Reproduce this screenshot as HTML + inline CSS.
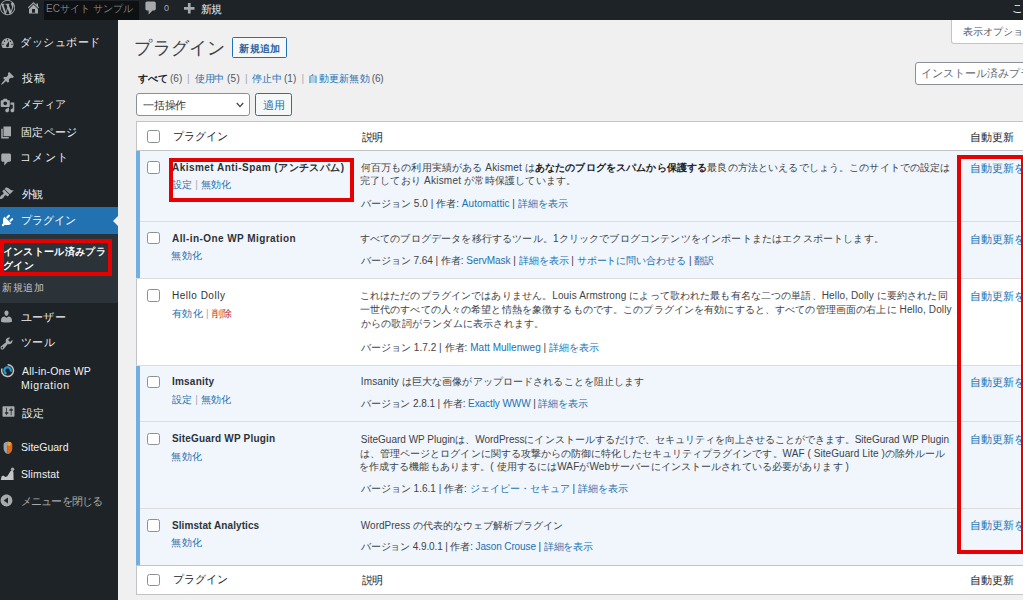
<!DOCTYPE html>
<html><head><meta charset="utf-8">
<style>
*{box-sizing:border-box;margin:0;padding:0}
html,body{width:1023px;height:600px;overflow:hidden;background:#f0f0f1;font-family:"Liberation Sans",sans-serif;}
.a{position:absolute}
.t{position:absolute;white-space:nowrap;line-height:1;}
.t a{color:#2271b1;text-decoration:none}
.t b{font-weight:700}
.cb{position:absolute;width:12.5px;height:12.5px;border:1px solid #8c8f94;border-radius:2.5px;background:#fff}
.rr{position:absolute;border:4px solid #e60000}
</style></head><body>
<!-- admin bar -->
<div class="a" style="left:0;top:0;width:1023px;height:20px;background:#1d2327"></div>
<div class="a" style="left:44px;top:1px;width:95px;height:18.5px;background:#0e1012"></div>
<!-- wp logo -->
<svg class="a" style="left:-0.4px;top:0.4px" width="15.2" height="15.2" viewBox="0 0 20 20"><path fill="#a7aaad" d="M20 10c0-5.52-4.48-10-10-10S0 4.48 0 10s4.48 10 10 10 10-4.48 10-10zM7.78 15.37L4.37 6.22c.55-.02 1.17-.08 1.17-.08.5-.06.44-1.13-.06-1.11 0 0-1.45.11-2.37.11-.18 0-.37 0-.58-.01C4.12 2.69 6.87 1.07 10 1.07c2.33 0 4.450.87 6.050 2.340-.68-.11-1.650.39-1.650 1.580 0 .74.45 1.360.9 2.100.35.610.55 1.360.55 2.460 0 1.490-1.400 5-1.400 5l-3.030-8.370c.54-.02.820-.17.820-.17.5-.05.44-1.250-.06-1.220 0 0-1.440.12-2.380.12-.87 0-2.330-.12-2.330-.12-.5-.03-.56 1.200-.06 1.220l.92.08 1.260 3.410zM17.410 10c.24-.64.74-1.870.43-4.250.7 1.290 1.050 2.710 1.050 4.250 0 3.290-1.730 6.240-4.400 7.780.97-2.590 1.940-5.200 2.920-7.780zM6.100 18.090C3.120 16.650 1.110 13.530 1.110 10c0-1.300.23-2.480.72-3.590.84 2.300 1.670 4.600 2.510 6.910.58 1.590 1.170 3.180 1.760 4.770zm4.030-6.630l2.580 6.980c-.86.29-1.760.45-2.710.45-.79 0-1.570-.11-2.290-.33.81-2.380 1.620-4.740 2.420-7.100z"/></svg>
<!-- home icon -->
<svg class="a" style="left:26.4px;top:0.2px" width="15" height="15" viewBox="0 0 20 20"><path fill="#a7aaad" d="M16 8.5l1.53 1.53-1.06 1.06L10 4.62l-6.47 6.47-1.06-1.06L10 2.5l4 4v-2h2v4zm-6-2.46l6 5.99V18H4v-5.97zM12 17v-5H8v5h4z"/></svg>
<!-- comment icon -->
<svg class="a" style="left:142.6px;top:0.4px" width="16" height="16" viewBox="0 0 20 20"><path fill="#a7aaad" d="M5 2h9c1.1 0 2 .9 2 2v7c0 1.1-.9 2-2 2h-2l-5 5v-5H5c-1.1 0-2-.9-2-2V4c0-1.1.9-2 2-2z"/></svg>
<!-- plus -->
<svg class="a" style="left:184.2px;top:3px" width="10.5" height="10.6" viewBox="0 0 10.5 10.6"><path fill="#a7aaad" d="M3.9 0h2.7v3.95h3.9v2.7H6.6v3.95H3.9V6.65H0v-2.7h3.9z"/></svg>

<!-- sidebar -->
<div class="a" style="left:0;top:20px;width:118px;height:580px;background:#1d2327"></div>
<div class="a" style="left:0;top:206.7px;width:118px;height:27.5px;background:#2271b1"></div>
<div class="a" style="left:0;top:234.2px;width:118px;height:69.3px;background:#2c3338"></div>
<svg class="a" style="left:112.5px;top:214.5px" width="6" height="12" viewBox="0 0 6 12"><path d="M6 0 L0 6 L6 12 Z" fill="#f0f0f1"/></svg>
<!-- sidebar icons -->
<svg class="a" style="left:-0.5px;top:35.75px" width="15" height="15" viewBox="0 0 20 20"><path fill="#a7aaad" d="M3.76 16h12.48c1.1-1.37 1.76-3.11 1.76-5 0-4.42-3.58-8-8-8s-8 3.58-8 8c0 1.89.66 3.63 1.76 5zM10 4c.55 0 1 .45 1 1s-.45 1-1 1-1-.45-1-1 .45-1 1-1zM6 6c.55 0 1 .45 1 1s-.45 1-1 1-1-.45-1-1 .45-1 1-1zm8 0c.55 0 1 .45 1 1s-.45 1-1 1-1-.45-1-1 .45-1 1-1zm-5.37 5.55L12 7v6c0 1.1-.9 2-2 2s-2-.9-2-2c0-.57.24-1.08.63-1.45zM4 10c.55 0 1 .45 1 1s-.45 1-1 1-1-.45-1-1 .45-1 1-1zm12 0c.55 0 1 .45 1 1s-.45 1-1 1-1-.45-1-1 .45-1 1-1z"/></svg>
<svg class="a" style="left:-0.5px;top:71.1px" width="15" height="15" viewBox="0 0 20 20"><path fill="#a7aaad" d="M10.44 3.02l1.82-1.82 6.36 6.35-1.83 1.82c-1.05-.68-2.48-.57-3.41.36l-.75.75c-.92.93-1.04 2.35-.35 3.41l-1.83 1.82-2.41-2.41-2.8 2.79c-.42.42-3.38 2.71-3.8 2.29s1.86-3.39 2.28-3.810l2.79-2.790L4.1 9.36l1.83-1.82c1.05.69 2.48.57 3.4-.36l.75-.75c.93-.92 1.05-2.35.36-3.410z"/></svg>
<svg class="a" style="left:-0.3px;top:98px" width="15" height="15" viewBox="0 0 20 20"><path fill="#a7aaad" d="M13 11V4c0-.55-.45-1-1-1h-1.67L9 1H5L3.67 3H2c-.55 0-1 .45-1 1v7c0 .55.45 1 1 1h10c.55 0 1-.45 1-1zM7 4.5c1.38 0 2.5 1.12 2.5 2.5S8.38 9.5 7 9.5 4.5 8.38 4.5 7 5.62 4.5 7 4.5zM14 6h5v10.5c0 1.38-1.12 2.5-2.5 2.5S14 17.88 14 16.5s1.12-2.5 2.5-2.5c.17 0 .34.02.5.05V9h-3V6zm-4 8.05V13h2v3.5c0 1.38-1.12 2.5-2.5 2.5S7 17.88 7 16.5 8.12 14 9.5 14c.17 0 .34.02.5.05z"/></svg>
<svg class="a" style="left:-1px;top:125.2px" width="15" height="15" viewBox="0 0 20 20"><path fill="#a7aaad" d="M6 15V2h10v13H6zm-1 1h8v2H3V5h2v11z"/></svg>
<svg class="a" style="left:-1px;top:151.8px" width="15" height="15" viewBox="0 0 20 20"><path fill="#a7aaad" d="M5 2h9c1.1 0 2 .9 2 2v7c0 1.1-.9 2-2 2h-2l-5 5v-5H5c-1.1 0-2-.9-2-2V4c0-1.1.9-2 2-2z"/></svg>
<svg class="a" style="left:-1px;top:186.4px" width="15" height="15" viewBox="0 0 20 20"><path fill="#a7aaad" d="M14.48 11.06L7.41 3.99l1.5-1.5c.5-.56 2.3-.47 3.51.32 1.21.8 1.43 1.28 2.91 2.1 1.18.64 2.45 1.26 4.45.85zm-.71.71L6.7 4.7 4.93 6.47c-.39.39-.39 1.02 0 1.41l1.06 1.06c.39.39.39 1.03 0 1.42-.6.6-1.43 1.11-2.21 1.69-.35.26-.7.53-1.01.84C1.43 14.23.4 16.08 1.4 17.07c.99 1 2.84-.03 4.18-1.36.31-.31.58-.66.85-1.020.57-.78 1.08-1.61 1.69-2.21.39-.39 1.02-.39 1.41 0l1.06 1.06c.39.39 1.02.39 1.41 0z"/></svg>
<svg class="a" style="left:-0.5px;top:213.4px" width="15" height="15" viewBox="0 0 20 20"><path fill="#ffffff" d="M13.11 4.36L9.87 7.6 8 5.73l3.24-3.24c.35-.34 1.05-.2 1.56.32.52.51.66 1.21.31 1.55zm-8 1.77l.91-1.12 9.01 9.01-1.19.84c-.71.71-2.63 1.16-3.82 1.16H6.14L4.9 17.26c-.59.59-1.54.59-2.12 0-.59-.58-.59-1.53 0-2.12l1.24-1.24v-3.88c0-1.13.4-3.19 1.09-3.890zm7.26 3.97l3.24-3.24c.34-.35 1.04-.21 1.55.31.52.51.66 1.21.31 1.55l-3.24 3.25z"/></svg>
<svg class="a" style="left:-0.8px;top:309.3px" width="15" height="15" viewBox="0 0 20 20"><path fill="#a7aaad" d="M10 9.25c-2.27 0-2.73-3.44-2.73-3.44C7 4.02 7.82 2 9.97 2c2.16 0 2.98 2.02 2.71 3.81 0 0-.41 3.44-2.68 3.44zm0 2.57L12.72 10c2.39 0 4.52 2.33 4.52 4.53v2.49s-3.65 1.13-7.24 1.13c-3.65 0-7.24-1.13-7.24-1.13v-2.49c0-2.25 1.94-4.48 4.47-4.48z"/></svg>
<svg class="a" style="left:-1px;top:336.3px" width="15" height="15" viewBox="0 0 20 20"><path fill="#a7aaad" d="M16.68 9.77c-1.34 1.34-3.3 1.67-4.95.99l-5.41 6.52c-.99.99-2.59.99-3.58 0s-.99-2.59 0-3.57l6.52-5.42c-.68-1.65-.35-3.61.99-4.95 1.28-1.28 3.12-1.62 4.72-1.06l-2.89 2.89 2.82 2.82 2.86-2.87c.53 1.58.18 3.39-1.08 4.65zM3.81 16.21c.4.39 1.04.39 1.43 0 .4-.4.4-1.04 0-1.43-.39-.4-1.03-.4-1.43 0-.39.39-.39 1.03 0 1.43z"/></svg>
<svg class="a" style="left:0px;top:364px" width="15" height="14" viewBox="0 0 15 14">
 <path d="M7.6 0.7 A5.9 5.9 0 1 1 2.06 4.58" fill="none" stroke="#c3c4c7" stroke-width="1.5"/>
 <path d="M10.7 7.73 A3.3 3.3 0 1 0 6.47 9.7" fill="none" stroke="#1e9fd8" stroke-width="2.2"/>
</svg>
<svg class="a" style="left:0.5px;top:403.75px" width="15" height="15" viewBox="0 0 20 20"><path fill="#a7aaad" d="M18 16V4c0-.55-.45-1-1-1H3c-.55 0-1 .45-1 1v12c0 .55.45 1 1 1h14c.55 0 1-.45 1-1zM8 11h1c.55 0 1 .45 1 1s-.45 1-1 1H8v1.5c0 .28-.22.5-.5.5s-.5-.22-.5-.5V13H6c-.55 0-1-.45-1-1s.45-1 1-1h1V5.5c0-.28.22-.5.5-.5s.5.22.5.5V11zm5-2h-1c-.55 0-1-.45-1-1s.45-1 1-1h1V5.5c0-.28.22-.5.5-.5s.5.22.5.5V7h1c.55 0 1 .45 1 1s-.45 1-1 1h-1v5.5c0 .28-.22.5-.5.5s-.5-.22-.5-.5V9z"/></svg>
<svg class="a" style="left:3px;top:440.5px" width="10" height="13.5" viewBox="0 0 10 13.5">
 <path d="M4.5 0.8 C2.5 0.8 0.6 1.6 0.6 3.5 V7.5 C0.6 10 2.6 12.3 4.5 13 Z" fill="#9ea3a8"/>
 <path d="M4.3 0.8 C7 0.6 9.3 1.4 9.3 3.5 V7.5 C9.3 10.2 7.3 12.3 5.6 13 L4.3 13 Z" fill="#e2681c"/>
 <path d="M4.3 0.8 C6 0.7 7.4 1 8.2 1.7 L7 5 L4.3 4.5 Z" fill="#e9a23a"/>
</svg>
<svg class="a" style="left:0px;top:466.5px" width="15" height="13.5" viewBox="0 0 15 13.5">
 <path d="M0.8 13.2 L1.6 9.2 L3.4 8.6 L5.2 10 L7.3 9.2 L10.4 4.2 L12.2 3 L13.4 5 L13.6 13.2 Z" fill="#c3c4c7"/><circle cx="12.6" cy="2.3" r="1.7" fill="#a7aaad"/>
</svg>
<svg class="a" style="left:-0.6px;top:493.4px" width="15" height="15" viewBox="0 0 20 20"><path fill="#a7aaad" d="M10 2.16c4.33 0 7.84 3.51 7.84 7.84s-3.51 7.84-7.84 7.840S2.16 14.33 2.16 10 5.71 2.16 10 2.16zm2 11.72V6.12L6.18 9.97z"/></svg>

<!-- heading controls -->
<div class="a" style="left:232.2px;top:37px;width:54.6px;height:20.7px;border:1px solid #2271b1;border-radius:1.5px;background:#f6f7f7"></div>
<div class="a" style="left:136.3px;top:92.5px;width:113.7px;height:23.2px;border:1px solid #8c8f94;border-radius:3px;background:#fff"></div>
<svg class="a" style="left:236px;top:101.5px" width="8" height="6" viewBox="0 0 8 6"><path d="M0.8 1 L4 4.6 L7.2 1" fill="none" stroke="#3c434a" stroke-width="1.25"/></svg>
<div class="a" style="left:255.3px;top:92.6px;width:37.2px;height:23.2px;border:1px solid #2271b1;border-radius:2.5px;background:#f6f7f7"></div>
<div class="a" style="left:951.3px;top:20px;width:80px;height:23.5px;border:1px solid #c3c4c7;border-top:none;border-radius:0 0 3px 3px;background:#fff"></div>
<div class="a" style="left:915.4px;top:62.2px;width:120px;height:23.3px;border:1px solid #8c8f94;border-radius:3px;background:#fff"></div>

<!-- table -->
<div class="a" style="left:136px;top:121px;width:900px;height:473.5px;border:1px solid #c3c4c7;background:#fff"></div>
<div class="a" style="left:137px;top:150px;width:900px;height:1px;background:#c3c4c7"></div>
<div class="a" style="left:137px;top:565px;width:900px;height:1px;background:#c3c4c7"></div>
<!-- active rows -->
<div class="a" style="left:136px;top:151px;width:900px;height:127px;background:#f0f6fc"></div>
<div class="a" style="left:136px;top:365px;width:900px;height:200px;background:#f0f6fc"></div>
<div class="a" style="left:136px;top:151px;width:3.7px;height:127px;background:#72aee6"></div>
<div class="a" style="left:136px;top:365px;width:3.7px;height:200px;background:#72aee6"></div>
<!-- row separators -->
<div class="a" style="left:139.7px;top:221px;width:900px;height:1px;background:#dcdcde"></div>
<div class="a" style="left:136px;top:277.5px;width:900px;height:1px;background:#dcdcde"></div>
<div class="a" style="left:136px;top:364.5px;width:900px;height:1px;background:#dcdcde"></div>
<div class="a" style="left:139.7px;top:421px;width:900px;height:1px;background:#dcdcde"></div>
<div class="a" style="left:139.7px;top:508px;width:900px;height:1px;background:#dcdcde"></div>
<!-- checkboxes -->
<div class="cb" style="left:147.4px;top:130.2px"></div>
<div class="cb" style="left:147.4px;top:161px"></div>
<div class="cb" style="left:147.4px;top:231.6px"></div>
<div class="cb" style="left:147.4px;top:289.2px"></div>
<div class="cb" style="left:147.4px;top:375.5px"></div>
<div class="cb" style="left:147.4px;top:432.5px"></div>
<div class="cb" style="left:147.4px;top:519px"></div>
<div class="cb" style="left:147.4px;top:573.8px"></div>

<div class="t" id="t0" style="left:46.00px;top:4.00px;font-size:10px;color:#7c7f83;">ECサイト サンプル</div>
<div class="t" id="t1" style="left:164.00px;top:4.20px;font-size:9px;color:#a7aaad;letter-spacing:2.600px;">0</div>
<div class="t" id="t2" style="left:201.20px;top:4.00px;font-size:10.5px;color:#f0f0f1;letter-spacing:-0.900px;">新規</div>
<div class="t" id="t3" style="left:1012.00px;top:3.00px;font-size:10.5px;color:#f0f0f1;">こ</div>
<div class="t" id="t4" style="left:20.00px;top:37.20px;font-size:11px;color:#f0f0f1;letter-spacing:0.500px;">ダッシュボード</div>
<div class="t" id="t5" style="left:22.00px;top:73.20px;font-size:11px;color:#f0f0f1;letter-spacing:0.600px;">投稿</div>
<div class="t" id="t6" style="left:21.00px;top:99.00px;font-size:11px;color:#f0f0f1;letter-spacing:0.302px;">メディア</div>
<div class="t" id="t7" style="left:21.00px;top:126.80px;font-size:11px;color:#f0f0f1;letter-spacing:0.350px;">固定ページ</div>
<div class="t" id="t8" style="left:20.00px;top:152.20px;font-size:11px;color:#f0f0f1;letter-spacing:1.302px;">コメント</div>
<div class="t" id="t9" style="left:22.00px;top:189.40px;font-size:11px;color:#f0f0f1;letter-spacing:-1.000px;">外観</div>
<div class="t" id="t10" style="left:21.00px;top:215.20px;font-size:11px;color:#ffffff;letter-spacing:0.100px;">プラグイン</div>
<div class="t" id="t11" style="left:2.80px;top:247.10px;font-size:9.6px;color:#ffffff;font-weight:700;letter-spacing:0.333px;">インストール済みプラ</div>
<div class="t" id="t12" style="left:2.80px;top:260.70px;font-size:9.6px;color:#ffffff;font-weight:700;letter-spacing:0.450px;">グイン</div>
<div class="t" id="t13" style="left:2.00px;top:283.20px;font-size:9.8px;color:#c3c4c7;letter-spacing:0.635px;">新規追加</div>
<div class="t" id="t14" style="left:21.00px;top:312.20px;font-size:11px;color:#f0f0f1;letter-spacing:0.205px;">ユーザー</div>
<div class="t" id="t15" style="left:21.00px;top:337.00px;font-size:11px;color:#f0f0f1;letter-spacing:0.300px;">ツール</div>
<div class="t" id="t16" style="left:22.00px;top:366.00px;font-size:10.5px;color:#f0f0f1;letter-spacing:0.195px;">All-in-One WP</div>
<div class="t" id="t17" style="left:21.00px;top:380.20px;font-size:10.5px;color:#f0f0f1;letter-spacing:0.601px;">Migration</div>
<div class="t" id="t18" style="left:22.00px;top:407.60px;font-size:11px;color:#f0f0f1;">設定</div>
<div class="t" id="t19" style="left:21.00px;top:442.00px;font-size:10.5px;color:#f0f0f1;letter-spacing:0.025px;">SiteGuard</div>
<div class="t" id="t20" style="left:21.00px;top:469.00px;font-size:10.5px;color:#f0f0f1;letter-spacing:0.119px;">Slimstat</div>
<div class="t" id="t21" style="left:21.00px;top:496.40px;font-size:11px;color:#a7aaad;letter-spacing:-0.857px;">メニューを閉じる</div>
<div class="t" id="t22" style="left:134.40px;top:40.40px;font-size:17.5px;color:#3c434a;font-weight:300;letter-spacing:0.225px;">プラグイン</div>
<div class="t" id="t23" style="left:239.20px;top:43.80px;font-size:9.6px;color:#2a62a0;font-weight:700;letter-spacing:0.365px;">新規追加</div>
<div class="t" id="t24" style="left:138.20px;top:74.00px;font-size:10px;color:#1d2327;letter-spacing:-0.200px;"><b>すべて</b></div>
<div class="t" id="t25" style="left:170.00px;top:74.00px;font-size:10px;color:#50575e;">(6)</div>
<div class="t" id="t26" style="left:187.00px;top:74.00px;font-size:10px;color:#a7aaad;">|</div>
<div class="t" id="t27" style="left:195.20px;top:74.00px;font-size:10px;color:#2271b1;letter-spacing:-0.350px;">使用中</div>
<div class="t" id="t28" style="left:227.00px;top:74.00px;font-size:10px;color:#50575e;letter-spacing:0.250px;">(5)</div>
<div class="t" id="t29" style="left:245.00px;top:74.00px;font-size:10px;color:#a7aaad;">|</div>
<div class="t" id="t30" style="left:251.80px;top:74.00px;font-size:10px;color:#2271b1;letter-spacing:0.200px;">停止中</div>
<div class="t" id="t31" style="left:284.00px;top:74.00px;font-size:10px;color:#50575e;">(1)</div>
<div class="t" id="t32" style="left:301.40px;top:74.00px;font-size:10px;color:#a7aaad;">|</div>
<div class="t" id="t33" style="left:308.40px;top:74.00px;font-size:10px;color:#2271b1;letter-spacing:0.240px;">自動更新無効</div>
<div class="t" id="t34" style="left:371.80px;top:74.00px;font-size:10px;color:#50575e;letter-spacing:-0.250px;">(6)</div>
<div class="t" id="t35" style="left:143.00px;top:99.60px;font-size:10.5px;color:#2c3338;letter-spacing:-0.167px;">一括操作</div>
<div class="t" id="t36" style="left:263.20px;top:100.00px;font-size:10.5px;color:#2271b1;">適用</div>
<div class="t" id="t37" style="left:963.00px;top:27.00px;font-size:10px;color:#50575e;">表示オプション</div>
<div class="t" id="t38" style="left:921.00px;top:68.00px;font-size:10.5px;color:#646970;">インストール済みプラグインを検索</div>
<div class="t" id="t39" style="left:172.60px;top:130.60px;font-size:10.5px;color:#1d2327;letter-spacing:0.025px;">プラグイン</div>
<div class="t" id="t40" style="left:361.80px;top:131.60px;font-size:10.5px;color:#1d2327;letter-spacing:-1.100px;">説明</div>
<div class="t" id="t41" style="left:970.40px;top:131.60px;font-size:10.5px;color:#1d2327;letter-spacing:-0.131px;">自動更新</div>
<div class="t" id="t42" style="left:172.60px;top:573.80px;font-size:10.5px;color:#1d2327;letter-spacing:0.025px;">プラグイン</div>
<div class="t" id="t43" style="left:361.80px;top:574.80px;font-size:10.5px;color:#1d2327;letter-spacing:-1.100px;">説明</div>
<div class="t" id="t44" style="left:970.40px;top:574.80px;font-size:10.5px;color:#1d2327;letter-spacing:-0.131px;">自動更新</div>
<div class="t" id="t45" style="left:172.00px;top:163.00px;font-size:10px;color:#2c3338;font-weight:700;letter-spacing:0.456px;">Akismet Anti-Spam (アンチスパム)</div>
<div class="t" id="t46" style="left:172.00px;top:180.00px;font-size:10px;color:#2271b1;letter-spacing:0.167px;"><span style="color:#2271b1">設定</span> <span style="color:#a7aaad">|</span> <span style="color:#2271b1">無効化</span></div>
<div class="t" id="t47" style="left:360.80px;top:163.00px;font-size:10px;color:#3c434a;letter-spacing:0.137px;">何百万もの利用実績がある Akismet は<b style="color:#1d2327">あなたのブログをスパムから保護する</b>最良の方法といえるでしょう。このサイトでの設定は</div>
<div class="t" id="t48" style="left:359.80px;top:176.00px;font-size:10px;color:#3c434a;letter-spacing:0.216px;">完了しており Akismet が常時保護しています。</div>
<div class="t" id="t49" style="left:360.80px;top:199.00px;font-size:10px;color:#3c434a;letter-spacing:0.042px;">バージョン 5.0 | 作者: <a>Automattic</a> | <a>詳細を表示</a></div>
<div class="t" id="t50" style="left:970.00px;top:163.00px;font-size:10.6px;color:#2271b1;">自動更新を有効化</div>
<div class="t" id="t51" style="left:172.00px;top:234.00px;font-size:10px;color:#2c3338;font-weight:700;letter-spacing:0.423px;">All-in-One WP Migration</div>
<div class="t" id="t52" style="left:171.00px;top:251.40px;font-size:10px;color:#2271b1;letter-spacing:0.700px;"><span style="color:#2271b1">無効化</span></div>
<div class="t" id="t53" style="left:359.80px;top:233.60px;font-size:10px;color:#3c434a;letter-spacing:0.165px;">すべてのブログデータを移行するツール。1クリックでブログコンテンツをインポートまたはエクスポートします。</div>
<div class="t" id="t54" style="left:360.80px;top:256.20px;font-size:10px;color:#3c434a;letter-spacing:-0.027px;">バージョン 7.64 | 作者: <a>ServMask</a> | <a>詳細を表示</a> | <a>サポートに問い合わせる</a> | <a>翻訳</a></div>
<div class="t" id="t55" style="left:970.00px;top:234.00px;font-size:10.6px;color:#2271b1;">自動更新を有効化</div>
<div class="t" id="t56" style="left:172.00px;top:291.00px;font-size:10px;color:#2c3338;letter-spacing:0.510px;">Hello Dolly</div>
<div class="t" id="t57" style="left:172.00px;top:308.80px;font-size:10px;color:#2271b1;letter-spacing:0.274px;"><span style="color:#2271b1">有効化</span> <span style="color:#a7aaad">|</span> <span style="color:#b32d2e">削除</span></div>
<div class="t" id="t58" style="left:359.80px;top:291.20px;font-size:10px;color:#3c434a;letter-spacing:0.128px;">これはただのプラグインではありません。Louis Armstrong によって歌われた最も有名な二つの単語、Hello, Dolly に要約された同</div>
<div class="t" id="t59" style="left:359.80px;top:305.20px;font-size:10px;color:#3c434a;letter-spacing:0.129px;">一世代のすべての人々の希望と情熱を象徴するものです。このプラグインを有効にすると、すべての管理画面の右上に Hello, Dolly</div>
<div class="t" id="t60" style="left:360.80px;top:319.20px;font-size:10px;color:#3c434a;letter-spacing:0.206px;">からの歌詞がランダムに表示されます。</div>
<div class="t" id="t61" style="left:360.80px;top:342.80px;font-size:10px;color:#3c434a;letter-spacing:0.038px;">バージョン 1.7.2 | 作者: <a>Matt Mullenweg</a> | <a>詳細を表示</a></div>
<div class="t" id="t62" style="left:970.00px;top:291.00px;font-size:10.6px;color:#2271b1;">自動更新を有効化</div>
<div class="t" id="t63" style="left:172.00px;top:376.80px;font-size:10px;color:#2c3338;font-weight:700;letter-spacing:0.214px;">Imsanity</div>
<div class="t" id="t64" style="left:172.00px;top:395.20px;font-size:10px;color:#2271b1;letter-spacing:0.131px;"><span style="color:#2271b1">設定</span> <span style="color:#a7aaad">|</span> <span style="color:#2271b1">無効化</span></div>
<div class="t" id="t65" style="left:360.80px;top:377.20px;font-size:10px;color:#3c434a;letter-spacing:0.111px;">Imsanity は巨大な画像がアップロードされることを阻止します</div>
<div class="t" id="t66" style="left:360.80px;top:398.80px;font-size:10px;color:#3c434a;letter-spacing:-0.081px;">バージョン 2.8.1 | 作者: <a>Exactly WWW</a> | <a>詳細を表示</a></div>
<div class="t" id="t67" style="left:970.00px;top:377.00px;font-size:10.6px;color:#2271b1;">自動更新を有効化</div>
<div class="t" id="t68" style="left:172.00px;top:434.00px;font-size:10px;color:#2c3338;font-weight:700;letter-spacing:0.180px;">SiteGuard WP Plugin</div>
<div class="t" id="t69" style="left:171.00px;top:452.00px;font-size:10px;color:#2271b1;letter-spacing:0.700px;"><span style="color:#2271b1">無効化</span></div>
<div class="t" id="t70" style="left:360.80px;top:434.80px;font-size:10px;color:#3c434a;letter-spacing:0.004px;">SiteGuard WP Pluginは、WordPressにインストールするだけで、セキュリティを向上させることができます。SiteGurad WP Plugin</div>
<div class="t" id="t71" style="left:359.80px;top:448.80px;font-size:10px;color:#3c434a;letter-spacing:0.067px;">は、管理ページとログインに関する攻撃からの防御に特化したセキュリティプラグインです。WAF ( SiteGuard Lite )の除外ルール</div>
<div class="t" id="t72" style="left:358.80px;top:462.00px;font-size:10px;color:#3c434a;letter-spacing:0.108px;">を作成する機能もあります。( 使用するにはWAFがWebサーバーにインストールされている必要があります )</div>
<div class="t" id="t73" style="left:360.80px;top:484.00px;font-size:10px;color:#3c434a;letter-spacing:0.007px;">バージョン 1.6.1 | 作者: <a>ジェイピー・セキュア</a> | <a>詳細を表示</a></div>
<div class="t" id="t74" style="left:970.00px;top:434.00px;font-size:10.6px;color:#2271b1;">自動更新を有効化</div>
<div class="t" id="t75" style="left:172.00px;top:520.60px;font-size:10px;color:#2c3338;font-weight:700;letter-spacing:0.079px;">Slimstat Analytics</div>
<div class="t" id="t76" style="left:171.00px;top:537.80px;font-size:10px;color:#2271b1;letter-spacing:0.700px;"><span style="color:#2271b1">無効化</span></div>
<div class="t" id="t77" style="left:360.80px;top:521.00px;font-size:10px;color:#3c434a;letter-spacing:0.013px;">WordPress の代表的なウェブ解析プラグイン</div>
<div class="t" id="t78" style="left:360.80px;top:541.80px;font-size:10px;color:#3c434a;letter-spacing:-0.117px;">バージョン 4.9.0.1 | 作者: <a>Jason Crouse</a> | <a>詳細を表示</a></div>
<div class="t" id="t79" style="left:970.00px;top:519.80px;font-size:10.6px;color:#2271b1;">自動更新を有効化</div>

<!-- red annotation rects -->
<div class="rr" style="left:169.3px;top:157.5px;width:184.7px;height:44.5px"></div>
<div class="rr" style="left:0px;top:239.4px;width:112px;height:36.9px"></div>
<div class="rr" style="left:957px;top:155px;width:67.5px;height:399.2px"></div>
</body></html>
